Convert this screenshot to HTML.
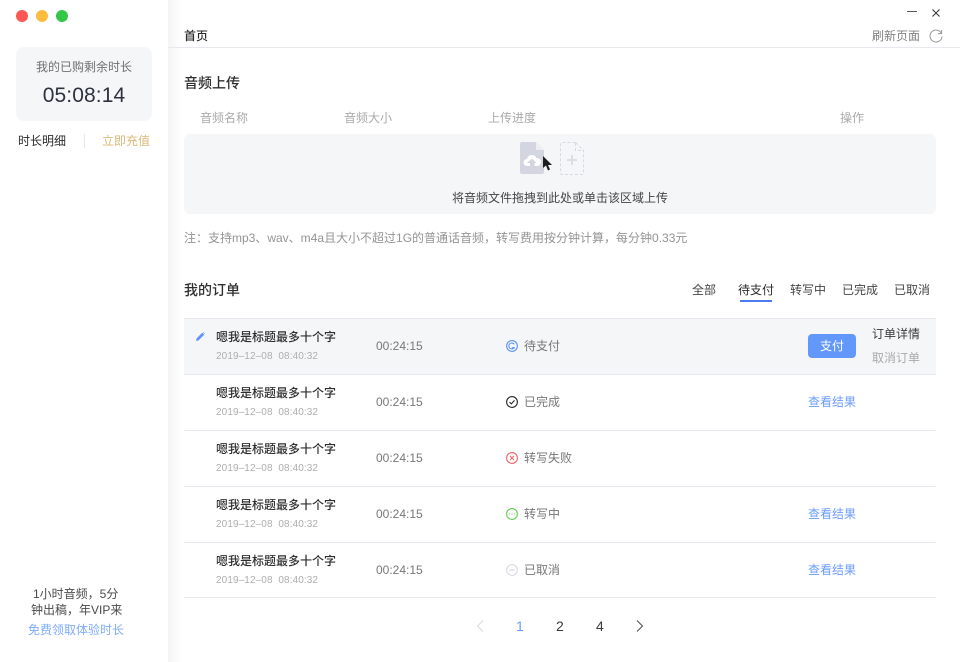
<!DOCTYPE html>
<html lang="zh"><head><meta charset="utf-8"><title>首页</title>
<style>
html,body{margin:0;padding:0;background:#fff}
body{width:960px;height:662px;position:relative;overflow:hidden;font-family:"Liberation Sans","Noto Sans CJK SC",sans-serif;font-size:12px;color:#444}
.t{position:absolute;white-space:nowrap;line-height:16px}
.b{position:absolute}
.g{color:#8c8c8c}.l{color:#aaa}.d{color:#2b2b2b}.bl{color:#6a9cfb}
.ti{font-weight:500;color:#2e2e2e;left:216px}
.dt{font-size:10px;color:#aeaeae;left:216px;letter-spacing:.1px}
.du{left:376px;color:#777}
.st{left:524px;color:#777}
svg{position:absolute;overflow:visible}
</style></head><body>
<div class="b" style="left:168px;top:0;width:14px;height:662px;background:linear-gradient(90deg,#f4f4f5,#fff)"></div>
<div class="b" style="left:16px;top:10px;width:12px;height:12px;border-radius:50%;background:#fc5753"></div>
<div class="b" style="left:36px;top:10px;width:12px;height:12px;border-radius:50%;background:#fdbc40"></div>
<div class="b" style="left:56px;top:10px;width:12px;height:12px;border-radius:50%;background:#33c748"></div>
<div class="b" style="left:16px;top:47px;width:136px;height:74px;border-radius:8px;background:#f5f6f8"></div>
<div class="t" style="left:16px;width:136px;text-align:center;top:59px;color:#707070">我的已购剩余时长</div>
<div class="t" style="left:16px;width:136px;text-align:center;top:84px;line-height:24px;font-size:21px;color:#2d3240;letter-spacing:.1px">05:08:14</div>
<div class="t" style="left:18px;top:133px;color:#2a2a2a">时长明细</div>
<div class="b" style="left:84px;top:134px;width:1px;height:14px;background:#e6e8ee"></div>
<div class="t" style="left:102px;top:133px;color:#dbb878">立即充值</div>
<div class="t" style="left:33px;top:586px;color:#4a4a4a">1小时音频，5分</div>
<div class="t" style="left:31px;top:602px;color:#4a4a4a">钟出稿，年VIP来</div>
<div class="t" style="left:28px;top:622px;color:#7eabfb">免费领取体验时长</div>

<div class="b" style="left:907px;top:11px;width:10px;height:1px;background:#555"></div>
<svg style="left:932px;top:8.500px" width="8" height="8" viewBox="0 0 8 8"><path d="M.5.5l7 7M7.5.5l-7 7" stroke="#333" fill="none"/></svg>
<div class="t" style="left:184px;top:28px;font-weight:500;color:#2a2a2a">首页</div>
<div class="t" style="left:872px;top:28px;color:#808080">刷新页面</div>
<svg style="left:929px;top:29px" width="14" height="14" viewBox="0 0 14 14"><path d="M12.300 4.200A6 6 0 1 0 13 7.500" stroke="#999" fill="none"/><path d="M12.600 1v3.600H9" stroke="#999" fill="none"/></svg>
<div class="b" style="left:168px;top:47px;width:792px;height:1px;background:#e8e9ef"></div>

<div class="t" style="left:184px;top:75px;font-size:14px;font-weight:500;color:#2e2e2e">音频上传</div>
<div class="t l" style="left:200px;top:110px">音频名称</div>
<div class="t l" style="left:344px;top:110px">音频大小</div>
<div class="t l" style="left:488px;top:110px">上传进度</div>
<div class="t l" style="left:840px;top:110px">操作</div>
<div class="b" style="left:184px;top:134px;width:752px;height:80px;border-radius:6px;background:#f5f6f8"></div>
<svg style="left:520px;top:142px" width="26" height="33" viewBox="0 0 26 33"><path d="M2 0h14l8 8v22a2 2 0 0 1-2 2H2a2 2 0 0 1-2-2V2a2 2 0 0 1 2-2z" fill="#d3d6e0"/><path d="M16 0l8 8h-8z" fill="#eceef3"/><path d="M7 24a3.500 3.500 0 0 1 0-7 5 5 0 0 1 9.500-1 4 4 0 0 1 1 8h-3v-3h2l-4.500-4.500L7 21h3v3z" fill="#fff"/></svg>
<svg style="left:543px;top:156px" width="9" height="16" viewBox="0 0 9 16"><path d="M0 0v12l3-2.500 2 5 2-1-2-4.500h4z" fill="#1d1d1d"/></svg>
<svg style="left:560px;top:142px" width="24" height="33" viewBox="0 0 24 33"><path d="M15.500.5H2A1.500 1.500 0 0 0 .5 2v29A1.500 1.500 0 0 0 2 32.500h20a1.500 1.500 0 0 0 1.500-1.500V8.500zM15.500 1v7.500h8" fill="none" stroke="#d8dae2" stroke-dasharray="3 2"/><path d="M12 13v10M7 18h10" stroke="#dcdee5" stroke-width="2"/></svg>
<div class="t" style="left:452px;top:190px;color:#444">将音频文件拖拽到此处或单击该区域上传</div>
<div class="t" style="left:184px;top:230px;color:#949494">注：支持mp3、wav、m4a且大小不超过1G的普通话音频，转写费用按分钟计算，每分钟0.33元</div>

<div class="t" style="left:184px;top:282px;font-size:14px;font-weight:500;color:#2e2e2e">我的订单</div>
<div class="t" style="left:692px;top:282px">全部</div>
<div class="t" style="left:738px;top:282px;color:#2a2a2a">待支付</div>
<div class="b" style="left:740px;top:300px;width:32px;height:2px;background:#4e7cf0"></div>
<div class="t" style="left:790px;top:282px">转写中</div>
<div class="t" style="left:842px;top:282px">已完成</div>
<div class="t" style="left:894px;top:282px">已取消</div>

<div class="b" style="left:184px;top:318px;width:752px;height:57px;background:#f5f6f8"></div>
<div class="b" style="left:184px;top:318px;width:752px;height:1px;background:#e8e9ee"></div>
<div class="b" style="left:184px;top:374px;width:752px;height:1px;background:#e8e9ee"></div>
<div class="b" style="left:184px;top:430px;width:752px;height:1px;background:#e8e9ee"></div>
<div class="b" style="left:184px;top:486px;width:752px;height:1px;background:#e8e9ee"></div>
<div class="b" style="left:184px;top:542px;width:752px;height:1px;background:#e8e9ee"></div>
<div class="b" style="left:184px;top:597px;width:752px;height:1px;background:#e8e9ee"></div>

<svg style="left:196px;top:332px" width="9" height="9" viewBox="0 0 9 9"><path d="M0 9l.6-2.600L6.200.8l2 2L2.600 8.400zM6.800.2l.5-.2 1.700 1.700-.2.500z" fill="#5f94fb"/></svg>

<div class="t ti" style="top:329px">嗯我是标题最多十个字</div><div class="t dt" style="top:349px">2019–12–08&nbsp; 08:40:32</div><div class="t du" style="top:338px">00:24:15</div><div class="t st" style="top:338px">待支付</div>
<div class="t ti" style="top:385px">嗯我是标题最多十个字</div><div class="t dt" style="top:405px">2019–12–08&nbsp; 08:40:32</div><div class="t du" style="top:394px">00:24:15</div><div class="t st" style="top:394px">已完成</div>
<div class="t ti" style="top:441px">嗯我是标题最多十个字</div><div class="t dt" style="top:461px">2019–12–08&nbsp; 08:40:32</div><div class="t du" style="top:450px">00:24:15</div><div class="t st" style="top:450px">转写失败</div>
<div class="t ti" style="top:497px">嗯我是标题最多十个字</div><div class="t dt" style="top:517px">2019–12–08&nbsp; 08:40:32</div><div class="t du" style="top:506px">00:24:15</div><div class="t st" style="top:506px">转写中</div>
<div class="t ti" style="top:553px">嗯我是标题最多十个字</div><div class="t dt" style="top:573px">2019–12–08&nbsp; 08:40:32</div><div class="t du" style="top:562px">00:24:15</div><div class="t st" style="top:562px">已取消</div>

<svg style="left:506px;top:340px" width="12" height="12" viewBox="0 0 12 12"><circle cx="6" cy="6" r="5.400" fill="none" stroke="#5f94fb" stroke-width="1.100"/><path d="M8.300 4.300A3 3 0 1 0 8.300 7.700H5.800" fill="none" stroke="#5f94fb" stroke-width="1.100"/></svg>
<svg style="left:506px;top:396px" width="12" height="12" viewBox="0 0 12 12"><circle cx="6" cy="6" r="5.400" fill="none" stroke="#2b2b2b" stroke-width="1.100"/><path d="M3.500 6.200l1.800 1.700 3.200-3.500" fill="none" stroke="#2b2b2b" stroke-width="1.100"/></svg>
<svg style="left:506px;top:452px" width="12" height="12" viewBox="0 0 12 12"><circle cx="6" cy="6" r="5.400" fill="none" stroke="#f2666a" stroke-width="1.100"/><path d="M4 4l4 4M8 4l-4 4" fill="none" stroke="#f2666a" stroke-width="1.100"/></svg>
<svg style="left:506px;top:508px" width="12" height="12" viewBox="0 0 12 12"><circle cx="6" cy="6" r="5.400" fill="none" stroke="#64cf55" stroke-width="1.100"/><path d="M3 6h6" fill="none" stroke="#64cf55" stroke-dasharray="1.200 1.200" stroke-width="1.100"/></svg>
<svg style="left:506px;top:564px" width="12" height="12" viewBox="0 0 12 12"><circle cx="6" cy="6" r="5.400" fill="none" stroke="#d8dbe3" stroke-width="1.100"/><path d="M3.500 6h5" fill="none" stroke="#d0d3db" stroke-width="1.100"/></svg>

<div class="b" style="left:808px;top:334px;width:48px;height:24px;border-radius:4px;background:#6398fb;color:#fff;text-align:center;line-height:24px">支付</div>
<div class="t" style="left:872px;top:326px;color:#3a3a3a">订单详情</div>
<div class="t l" style="left:872px;top:350px">取消订单</div>
<div class="t bl" style="left:808px;top:394px">查看结果</div>
<div class="t bl" style="left:808px;top:506px">查看结果</div>
<div class="t bl" style="left:808px;top:562px">查看结果</div>

<svg style="left:476px;top:620px" width="8" height="12" viewBox="0 0 8 12"><path d="M7 .5L1.500 6 7 11.500" fill="none" stroke="#dcdcdc" stroke-width="1.100"/></svg>
<div class="t bl" style="left:516px;top:618px;font-size:14px">1</div>
<div class="t" style="left:556px;top:618px;font-size:14px;color:#3a3a3a">2</div>
<div class="t" style="left:596px;top:618px;font-size:14px;color:#3a3a3a">4</div>
<svg style="left:636px;top:620px" width="8" height="12" viewBox="0 0 8 12"><path d="M1 .5L6.500 6 1 11.500" fill="none" stroke="#555" stroke-width="1.100"/></svg>
</body></html>
